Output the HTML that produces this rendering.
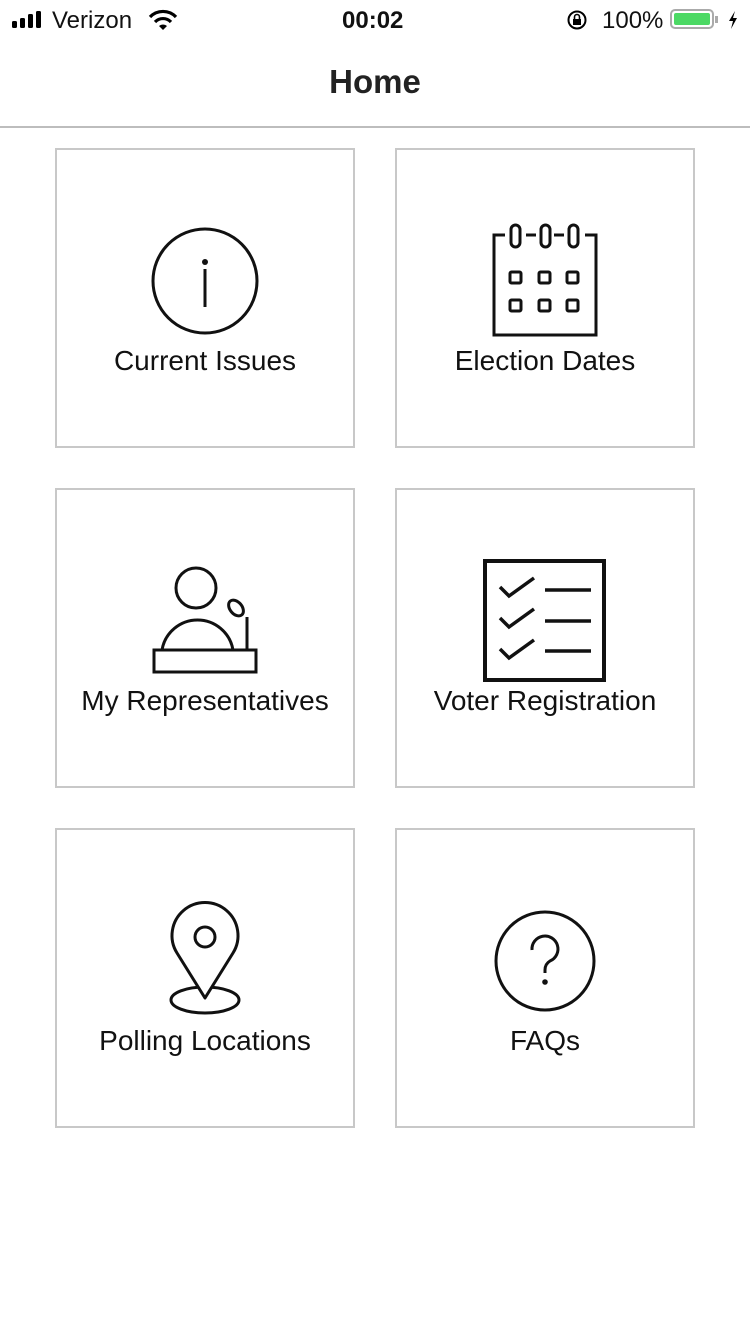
<!DOCTYPE html><html><head><meta charset="utf-8"><style>
body{margin:0;width:750px;height:1334px;background:#fff;font-family:"Liberation Sans",sans-serif;color:#111;position:relative;overflow:hidden}
.sb{position:absolute;top:0;left:0;width:750px;height:40px;font-size:24px}
.title{position:absolute;top:63px;width:750px;text-align:center;font-size:33px;font-weight:bold;color:#222}
.hr{position:absolute;top:126px;left:0;width:750px;height:2px;background:#bdbdbd}
.box{position:absolute;width:296px;height:296px;border:2px solid #c8c8c8}
.lbl{position:absolute;width:300px;text-align:center;font-size:28px;color:#111}
svg.ic{position:absolute;left:0;top:0}
</style></head><body>
<div class="sb">
<svg style="position:absolute;left:12px;top:11px" width="36" height="18"><rect x="0" y="10" width="5" height="7" rx="1.5"/><rect x="8" y="7" width="5" height="10" rx="1.5"/><rect x="16" y="3" width="5" height="14" rx="1.5"/><rect x="24" y="0" width="5" height="17" rx="1.5"/></svg>
<span style="position:absolute;left:52px;top:7px">Verizon</span>
<svg style="position:absolute;left:148px;top:9px" width="30" height="22" viewBox="0 0 30 22"><path d="M2 8 A18 18 0 0 1 28 8" fill="none" stroke="#000" stroke-width="3.2"/><path d="M7 13 A11 11 0 0 1 23 13" fill="none" stroke="#000" stroke-width="3.2"/><path d="M11 17 L15 21 L19 17 A6 6 0 0 0 11 17Z"/></svg>
<span style="position:absolute;left:342px;top:7px;font-weight:bold">00:02</span>
<svg style="position:absolute;left:566px;top:9px" width="22" height="22" viewBox="0 0 22 22"><circle cx="11" cy="11" r="8.5" fill="none" stroke="#000" stroke-width="2"/><rect x="7" y="10" width="8" height="6"/><path d="M8.5 10V8a2.5 2.5 0 0 1 5 0v2" fill="none" stroke="#000" stroke-width="1.6"/></svg>
<span style="position:absolute;left:602px;top:7px">100%</span>
<div style="position:absolute;left:670px;top:9px;width:44px;height:20px;border:2px solid #aaa;border-radius:5px;box-sizing:border-box;padding:2px"><div style="width:100%;height:100%;background:#4cd964;border-radius:2px"></div></div>
<div style="position:absolute;left:715px;top:16px;width:3px;height:7px;background:#aaa"></div>
<svg style="position:absolute;left:727px;top:11px" width="12" height="18" viewBox="0 0 12 18"><path d="M8 0 L2 10 H6 L4 18 L10 7 H6Z"/></svg>
</div>
<div class="title">Home</div>
<div class="hr"></div>

<div class="box" style="left:55px;top:148px"></div>
<div class="box" style="left:395px;top:148px"></div>
<div class="box" style="left:55px;top:488px"></div>
<div class="box" style="left:395px;top:488px"></div>
<div class="box" style="left:55px;top:828px"></div>
<div class="box" style="left:395px;top:828px"></div>

<div class="lbl" style="left:55px;top:345px">Current Issues</div>
<div class="lbl" style="left:395px;top:345px">Election Dates</div>
<div class="lbl" style="left:55px;top:685px">My Representatives</div>
<div class="lbl" style="left:395px;top:685px">Voter Registration</div>
<div class="lbl" style="left:55px;top:1025px">Polling Locations</div>
<div class="lbl" style="left:395px;top:1025px">FAQs</div>

<svg class="ic" width="750" height="1334" fill="none" stroke="#111" stroke-width="3">
<circle cx="205" cy="281" r="52"/>
<circle cx="205" cy="262" r="3" fill="#111" stroke="none"/>
<line x1="205" y1="269" x2="205" y2="307"/>
<path d="M505 235 H494 V335 H596 V235 H585 M526 235 H536 M554 235 H564"/>
<rect x="511" y="225" width="9" height="22" rx="4.5"/>
<rect x="541" y="225" width="9" height="22" rx="4.5"/>
<rect x="569" y="225" width="9" height="22" rx="4.5"/>
<rect x="510" y="272" width="11" height="11" rx="1.5"/><rect x="539" y="272" width="11" height="11" rx="1.5"/><rect x="567" y="272" width="11" height="11" rx="1.5"/>
<rect x="510" y="300" width="11" height="11" rx="1.5"/><rect x="539" y="300" width="11" height="11" rx="1.5"/><rect x="567" y="300" width="11" height="11" rx="1.5"/>
<circle cx="196" cy="588" r="20"/>
<path d="M162 650 A36 36 0 0 1 233 650"/>
<ellipse cx="236" cy="608" rx="6" ry="9" transform="rotate(-40 236 608)"/>
<line x1="247" y1="617" x2="247" y2="650"/>
<rect x="154" y="650" width="102" height="22"/>
<rect x="485" y="561" width="119" height="119" stroke-width="4"/>
<g stroke-width="3.5"><path d="M500 587 L509 596 L534 578"/><path d="M500 618 L509 627 L534 609"/><path d="M500 649 L509 658 L534 640"/>
<line x1="545" y1="590" x2="591" y2="590"/><line x1="545" y1="621" x2="591" y2="621"/><line x1="545" y1="651" x2="591" y2="651"/></g>
<ellipse cx="205" cy="1000" rx="34" ry="13"/>
<path d="M205 998 L177 953 A33 33 0 1 1 233 953 Z" stroke-linejoin="round" fill="#fff"/>
<circle cx="205" cy="937" r="10"/>
<circle cx="545" cy="961" r="49"/>
<path d="M532 950 A13 13 0 1 1 550 961 Q545 964 545 970 V973"/>
<circle cx="545" cy="982" r="2.8" fill="#111" stroke="none"/>
</svg>
</body></html>
